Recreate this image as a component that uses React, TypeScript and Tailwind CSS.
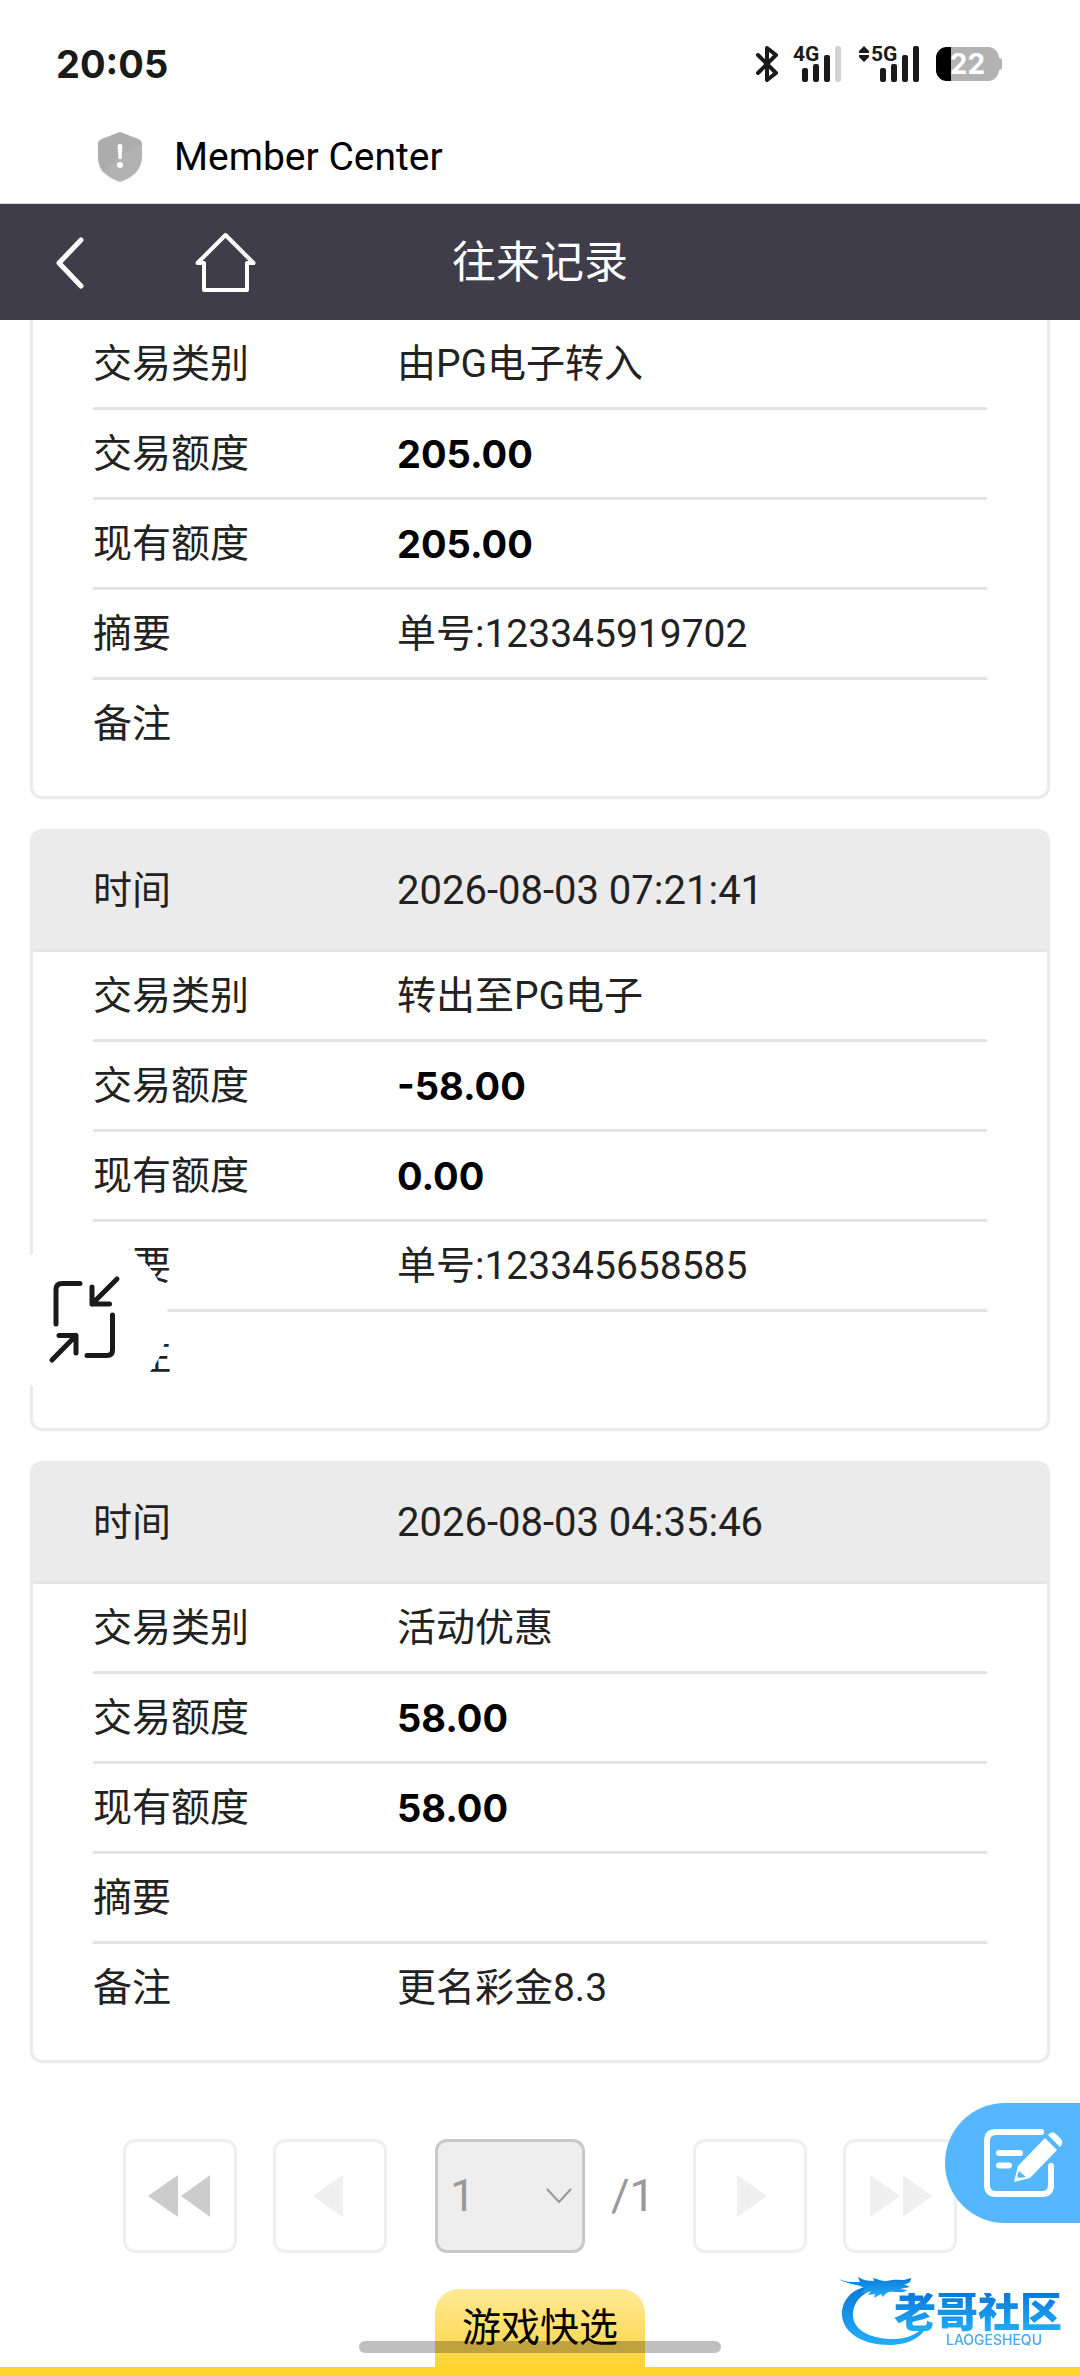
import { useState } from 'react';

type TransferRecord = {
  time?: string;
  type: string;
  amount: string;
  balance: string;
  summary: string;
  remark: string;
};

// the first record is already scrolled past its time row
const records: TransferRecord[] = [
  { type: '由PG电子转入', amount: '205.00', balance: '205.00', summary: '单号:123345919702', remark: '' },
  { time: '2026-08-03 07:21:41', type: '转出至PG电子', amount: '-58.00', balance: '0.00', summary: '单号:123345658585', remark: '' },
  { time: '2026-08-03 04:35:46', type: '活动优惠', amount: '58.00', balance: '58.00', summary: '', remark: '更名彩金8.3' },
];

function Signal({ label, weak, data }: { label: string; weak?: boolean; data?: boolean }) {
  return (
    <div className="relative h-9 w-12">
      <svg viewBox="0 0 48 36" className="h-9 w-12" fill="#1a1a1a">
        <rect x="9" y="22" width="6" height="14" rx="2" />
        <rect x="20" y="18" width="6" height="18" rx="2" />
        <rect x="31" y="9" width="6" height="27" rx="2" />
        <rect x="42" y="0" width="6" height="36" rx="2" fill={weak ? '#d2d2d2' : '#1a1a1a'} />
      </svg>
      <span className="absolute -top-1 left-0 font-[Roboto] text-[21px]/6 font-bold text-[#1a1a1a]">{label}</span>
      {data && (
        <svg viewBox="0 0 10 16" className="absolute top-0 -left-3 h-4 w-2.5" fill="#1a1a1a">
          <path d="M5 0l5 5v2H0V5zM5 16l5-5V9H0v2z" />
        </svg>
      )}
    </div>
  );
}

function StatusBar() {
  return (
    <div className="flex h-32 items-center justify-between pr-[78px] pl-14">
      <span className="font-[Inter] text-[38px]/[48px] font-bold text-[#1a1a1a]">20:05</span>
      <div className="flex items-center">
        <svg viewBox="0 0 24 38" className="mr-3.5 h-[38px] w-6" fill="none" stroke="#1a1a1a" strokeWidth="4" strokeLinecap="round" strokeLinejoin="round">
          <path d="M3 10l18 18-9 7V3l9 7L3 28" />
        </svg>
        <Signal label="4G" weak />
        <div className="w-[30px]" />
        <Signal label="5G" data />
        <div className="relative ml-[17px] flex h-[34px] w-[63px] items-center justify-center overflow-hidden rounded-[11px] bg-[#b3b3b3]">
          <div className="absolute inset-y-0 left-0 w-[15px] bg-black" />
          <span className="relative font-[Inter] text-[28px]/[34px] font-bold text-white">22</span>
        </div>
        <div className="h-3 w-[3px] rounded-r-sm bg-[#b3b3b3]" />
      </div>
    </div>
  );
}

function TitleBar() {
  return (
    <div className="flex h-[76px] items-center gap-8 border-b border-[#d9d9dc] pb-[17px] pl-[98px]">
      <svg viewBox="0 0 44 50" className="h-[50px] w-11">
        <path d="M22 0L40 7q4 2 4 5v13c0 13-10 21-22 25C10 46 0 38 0 25V12q0-3 4-5z" fill="#b2b2b2" />
        <path d="M22 0L40 7q3 1 4 4L22 24 5 41Q0 34 0 25V12q0-3 4-5z" fill="#a6a6a6" opacity=".5" />
        <path d="M19.500 14q0-2 2.500-2t2.500 2l-1 13h-3z" fill="#fff" />
        <circle cx="22" cy="33" r="3" fill="#fff" />
      </svg>
      <span className="font-[Roboto] text-[39px]/[48px] text-black">Member Center</span>
    </div>
  );
}

function NavBar() {
  return (
    <header className="grid h-[116px] grid-cols-3 items-center bg-[#3e3d49] pt-0.5 text-white">
      <div className="flex items-center gap-[111px] pl-14">
        <a href="#back" aria-label="返回">
          <svg viewBox="0 0 28 52" className="h-[52px] w-7" fill="none" stroke="currentColor" strokeWidth="5" strokeLinecap="round" strokeLinejoin="round">
            <path d="M25 3L3 26l22 23" />
          </svg>
        </a>
        <a href="#home" aria-label="首页">
          <svg viewBox="0 0 61 60" className="h-[60px] w-[61px]" fill="none" stroke="currentColor" strokeWidth="4" strokeLinecap="round" strokeLinejoin="round">
            <path d="M30.500 2L58.500 30H52v27H9V30H2.500z" />
          </svg>
        </a>
      </div>
      <h1 className="text-center text-[44px]/[60px]">往来记录</h1>
    </header>
  );
}

function Row({ label, value, strong, last }: { label: string; value: string; strong?: boolean; last?: boolean }) {
  return (
    <div className={`flex h-[90px] items-center ${last ? 'pb-[3px]' : 'border-b-[3px] border-[#e4e4e4]'}`}>
      <dt className="w-[34%]">{label}</dt>
      <dd className={strong ? 'font-[Inter] text-[38px] font-bold text-black' : ''}>{value}</dd>
    </div>
  );
}

function RecordCard({ record }: { record: TransferRecord }) {
  return (
    <dl
      className={`overflow-hidden border-[3px] border-[#ebebeb] text-[39px]/[48px] text-[#222] ${
        record.time ? 'rounded-xl' : 'rounded-b-xl border-t-0'
      }`}>
      {record.time && (
        <div className="flex h-[120px] items-center border-b-[3px] border-[#e4e4e4] bg-[#ebebeb] px-15">
          <dt className="w-[34%]">时间</dt>
          <dd className="text-[40px]">{record.time}</dd>
        </div>
      )}
      <div className="px-15 pb-[26px]">
        <Row label="交易类别" value={record.type} />
        <Row label="交易额度" value={record.amount} strong />
        <Row label="现有额度" value={record.balance} strong />
        <Row label="摘要" value={record.summary} />
        <Row label="备注" value={record.remark} last />
      </div>
    </dl>
  );
}

function PageButton({ label, icon, active }: { label: string; icon: string; active?: boolean }) {
  return (
    <button
      type="button"
      aria-label={label}
      className={`flex size-[114px] items-center justify-center rounded-xl border-[3px] border-[#efefef] ${active ? 'text-[#ccc]' : 'text-[#efefef]'}`}>
      <svg viewBox="0 0 66 44" className="h-11 w-[66px]" fill="currentColor">
        <path d={icon} />
      </svg>
    </button>
  );
}

function Pagination() {
  const [page, setPage] = useState('1');

  return (
    <nav className="mt-[76px] flex items-center justify-center">
      <div className="flex gap-9">
        <PageButton label="第一页" icon="M31 1v42L1 22zM63 1v42L34 22z" active />
        <PageButton label="上一页" icon="M46 1v42L16 22z" />
      </div>
      <div className="relative ml-12">
        <select
          aria-label="页码"
          value={page}
          onChange={(e) => setPage(e.target.value)}
          className="h-[114px] w-[150px] appearance-none rounded-xl border-[3px] border-[#c9c9c9] bg-[#eee] pl-3 text-[45px] text-[#999]">
          <option value="1">1</option>
        </select>
        <svg viewBox="0 0 26 16" className="pointer-events-none absolute top-[49px] right-[13px] h-4 w-[26px]" fill="none" stroke="#999" strokeWidth="2">
          <path d="M1 1l12 13L25 1" />
        </svg>
      </div>
      <span className="w-[108px] pl-[26px] text-[45px] text-[#999]">/1</span>
      <div className="flex gap-9">
        <PageButton label="下一页" icon="M20 1v42L50 22z" />
        <PageButton label="最后一页" icon="M3 1v42L33 22zM36 1v42L65 22z" />
      </div>
    </nav>
  );
}

function Watermark() {
  return (
    <div className="pointer-events-none fixed right-[18px] bottom-6 flex h-20 w-[224px] flex-col items-end pt-[21px]">
      <svg viewBox="0 0 224 80" className="absolute inset-0 h-20 w-[224px]">
        <defs>
          <linearGradient id="ring" x1="0" y1="0" x2="0" y2="1">
            <stop offset="0" stopColor="#0b78d8" />
            <stop offset="1" stopColor="#22aef8" />
          </linearGradient>
        </defs>
        <g fill="url(#ring)">
          <path d="M30 14C11 18 3 31 4 44c2 18 22 29 47 29 21 0 35-9 40-23-10 12-23 18-39 17C30 66 15 57 15 43c0-13 8-21 22-26z" />
          <path d="M1 7c8 4 14 3 21 3l-2-5c5 3 10 4 16 4l-1-3c5 1 8 3 13 3 9-2 14-1 18-1l7-2c0 4-3 6-7 6l6 3-10 2 7 1c-2 3-8 2-12 2-7-1-9 1-12 5l-2-3-7 4 1-4-7 1 3-4-10 3 4-6C19 12 8 12 1 7z" />
        </g>
      </svg>
      <span className="relative bg-gradient-to-b from-[#0b78d8] to-[#22aef8] bg-clip-text text-[42px]/[39px] font-black whitespace-nowrap text-transparent">
        老哥社区
      </span>
      <span className="relative mr-5 font-[Inter] text-sm/4 font-medium text-[#49a9ee]">LAOGESHEQU</span>
    </div>
  );
}

export default function App() {
  return (
    <div className="flex min-h-screen flex-col bg-white font-[Roboto,'Noto_Sans_CJK_SC',sans-serif]">
      <StatusBar />
      <TitleBar />
      <NavBar />

      <main className="px-[30px]">
        <div className="flex flex-col gap-[30px]">
          {records.map((r, i) => (
            <RecordCard key={i} record={r} />
          ))}
        </div>
        <Pagination />
      </main>

      <footer className="mt-auto flex flex-col items-center border-b-[9px] border-[#ffd42f] pt-9">
        <button type="button" className="h-[78px] w-[210px] rounded-t-3xl bg-gradient-to-b from-[#ffe994] to-[#ffd42f] text-[39px]/[48px] text-black">
          游戏快选
        </button>
      </footer>

      {/* Floating shortcuts */}
      <button type="button" aria-label="退出全屏" className="fixed top-[52%] left-0 flex size-[168px] items-center justify-center rounded-full bg-white">
        <svg viewBox="46 72 76 96" className="h-24 w-[76px]" fill="none" stroke="#1a1a1a" strokeWidth="5" strokeLinecap="round" strokeLinejoin="round">
          <path d="M80 83.500H62q-6 0-6 6V124M87 155.500h20q5.500 0 5.500-5.500V115" />
          <path d="M117 79L92 104M92 87v17h17.500M52 160l24-24.500M59 135.500h17V153" />
        </svg>
      </button>
      <button type="button" aria-label="反馈" className="fixed right-0 bottom-[153px] h-[120px] w-[135px] rounded-l-full bg-[#54b7ff] pl-[39px]">
        <svg viewBox="0 0 80 70" className="h-[70px] w-20" fill="none" stroke="#fff" strokeWidth="6" strokeLinecap="round">
          <path d="M57 4H12q-9 0-9 9v44q0 9 9 9h46q9 0 9-9V38" />
          <path d="M15 25h21M15 37.500h10" />
          <path d="M61 10l12 12-27 28-16 4 4-16z" fill="#fff" stroke="none" />
          <path d="M64 7q4-5 8-1l5 5q3 4-1 8z" fill="#fff" stroke="none" />
          <path d="M35 43l7 6-7 1-2-2z" fill="#54b7ff" stroke="none" />
        </svg>
      </button>
      <Watermark />
      <div className="pointer-events-none fixed bottom-[23px] left-1/2 h-3 w-[362px] -translate-x-1/2 rounded-full bg-black/25" />
    </div>
  );
}
